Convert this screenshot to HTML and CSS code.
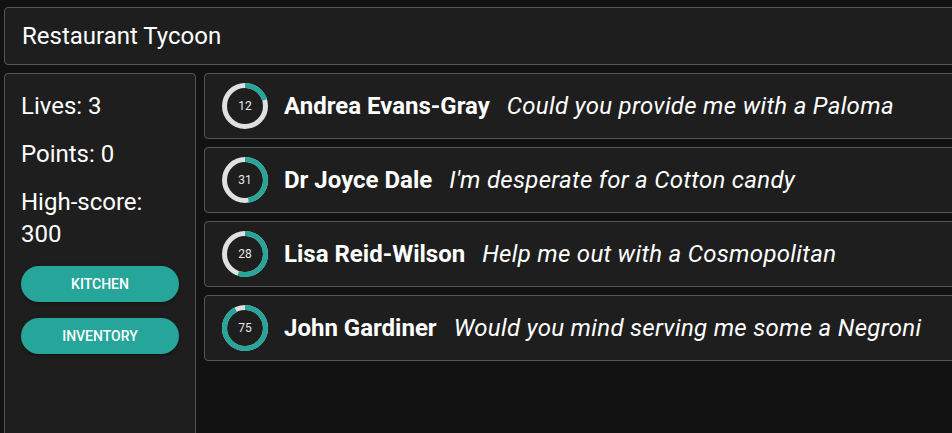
FILE: index.html
```html
<!DOCTYPE html>
<html lang="en">
<head>
<meta charset="utf-8">
<title>Restaurant Tycoon</title>
<link rel="stylesheet" href="styles.css">
</head>
<body>
<div class="app">
  <header class="topbar">Restaurant Tycoon</header>
  <div class="main">
    <aside class="sidebar">
      <p class="stat">Lives: 3</p>
      <p class="stat">Points: 0</p>
      <p class="stat">High-score: 300</p>
      <button class="btn">Kitchen</button>
      <button class="btn">Inventory</button>
    </aside>
    <section class="orders">
      <div class="order">
        <div class="timer">
          <svg viewBox="0 0 46 46" width="46" height="46"><circle class="track" cx="23" cy="23" r="20.5"/><circle class="value" cx="23" cy="23" r="20.5" style="stroke-dasharray: 25.8 200"/></svg>
          <span class="num">12</span>
        </div>
        <span class="name">Andrea Evans-Gray</span>
        <span class="quote">Could you provide me with a Paloma</span>
      </div>
      <div class="order">
        <div class="timer">
          <svg viewBox="0 0 46 46" width="46" height="46"><circle class="track" cx="23" cy="23" r="20.5"/><circle class="value" cx="23" cy="23" r="20.5" style="stroke-dasharray: 60.5 200"/></svg>
          <span class="num">31</span>
        </div>
        <span class="name">Dr Joyce Dale</span>
        <span class="quote">I'm desperate for a Cotton candy</span>
      </div>
      <div class="order">
        <div class="timer">
          <svg viewBox="0 0 46 46" width="46" height="46"><circle class="track" cx="23" cy="23" r="20.5"/><circle class="value" cx="23" cy="23" r="20.5" style="stroke-dasharray: 70.8 200"/></svg>
          <span class="num">28</span>
        </div>
        <span class="name">Lisa Reid-Wilson</span>
        <span class="quote">Help me out with a Cosmopolitan</span>
      </div>
      <div class="order">
        <div class="timer">
          <svg viewBox="0 0 46 46" width="46" height="46"><circle class="track" cx="23" cy="23" r="20.5"/><circle class="value" cx="23" cy="23" r="20.5" style="stroke-dasharray: 118.5 200"/></svg>
          <span class="num">75</span>
        </div>
        <span class="name">John Gardiner</span>
        <span class="quote">Would you mind serving me some a Negroni</span>
      </div>
    </section>
  </div>
</div>
</body>
</html>
```
FILE: styles.css
```css
html, body {
  margin: 0;
  padding: 0;
  background: #121212;
  overflow: hidden;
  height: 100%;
}
body {
  font-family: Roboto, "Liberation Sans", sans-serif;
  color: #fff;
}
.app {
  width: 1100px;
  padding: 7px 0 0 4px;
}
.topbar {
  height: 56px;
  border: 1px solid #555;
  border-radius: 4px;
  background: #1e1e1e;
  display: flex;
  align-items: center;
  padding: 0 17px;
  font-size: 24px;
  font-weight: 400;
}
.main {
  display: flex;
  gap: 8px;
  margin-top: 8px;
}
.sidebar {
  box-sizing: border-box;
  width: 192px;
  height: 420px;
  flex: none;
  border: 1px solid #555;
  border-radius: 4px;
  background: #1e1e1e;
  padding: 16px;
  display: flex;
  flex-direction: column;
}
.stat {
  margin: 0 0 16px;
  font-size: 24px;
  line-height: 32px;
}
.btn {
  height: 36px;
  border: none;
  border-radius: 18px;
  background: #26a69a;
  color: #fff;
  font-family: Roboto, "Liberation Sans", sans-serif;
  font-size: 14px;
  font-weight: 500;
  letter-spacing: 0;
  text-transform: uppercase;
  box-shadow: 0 3px 1px -2px rgba(0,0,0,.2), 0 2px 2px 0 rgba(0,0,0,.14), 0 1px 5px 0 rgba(0,0,0,.12);
  margin-bottom: 16px;
  padding: 0;
}
.orders {
  flex: 1;
  display: flex;
  flex-direction: column;
  gap: 8px;
}
.order {
  height: 64px;
  border: 1px solid #555;
  border-radius: 4px;
  background: #1e1e1e;
  display: flex;
  align-items: center;
  padding: 0 17px;
  white-space: nowrap;
}
.timer {
  position: relative;
  width: 46px;
  height: 46px;
  flex: none;
  margin-right: 16px;
}
.timer svg {
  display: block;
  transform: rotate(-90deg);
}
.track {
  fill: none;
  stroke: #e0e0e0;
  stroke-width: 5;
}
.value {
  fill: none;
  stroke: #26a69a;
  stroke-width: 5;
}
.num {
  position: absolute;
  inset: 0;
  display: flex;
  align-items: center;
  justify-content: center;
  font-size: 12px;
  color: #e8e8e8;
}
.name {
  font-size: 24px;
  font-weight: 700;
  margin-right: 17px;
}
.quote {
  font-size: 24px;
  font-style: italic;
  letter-spacing: 0.3px;
}
```
